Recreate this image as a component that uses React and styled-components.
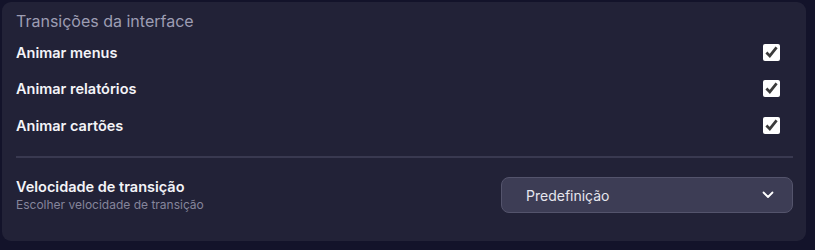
import React from 'react';
import styled, { createGlobalStyle } from 'styled-components';

const GlobalStyle = createGlobalStyle`
	html, body {
		margin: 0;
		padding: 0;
		background: #13132a;
		font-family: Inter, 'Noto Sans', sans-serif;
	}
`;

const Page = styled.div`
	width: 815px;
	height: 250px;
	padding: 2px 9px 9px 2px;
	box-sizing: border-box;
`;

const Card = styled.section`
	height: 100%;
	box-sizing: border-box;
	background: #222237;
	border-radius: 9px;
	padding: 9px 13px 0 14px;
	display: flex;
	flex-direction: column;
`;

const Heading = styled.h2`
	margin: 0 0 3px;
	font-size: 16px;
	font-weight: 400;
	color: #9d9db3;
	line-height: 20px;
`;

const ToggleRow = styled.label`
	display: flex;
	align-items: center;
	justify-content: space-between;
	height: 36px;
	padding-right: 13px;
	font-size: 14.5px;
	font-weight: 600;
	color: #f4f4f8;
	cursor: pointer;
	&:nth-of-type(3) {
		margin-top: 1px;
	}
`;

const Check = styled.input.attrs({ type: 'checkbox' })`
	width: 17px;
	height: 17px;
	margin: 0;
	accent-color: #ffffff;
`;

const Divider = styled.hr`
	border: none;
	height: 2px;
	background: #393950;
	margin: 13px 0 0;
`;

const SettingRow = styled.div`
	display: flex;
	align-items: center;
	justify-content: space-between;
	padding-top: 19px;
`;

const SettingText = styled.div`
	display: flex;
	flex-direction: column;
`;

const SettingTitle = styled.div`
	font-size: 14.5px;
	font-weight: 600;
	color: #f4f4f8;
	line-height: 20px;
`;

const SettingHint = styled.div`
	font-size: 12px;
	color: #85859b;
	line-height: 16px;
`;

const Select = styled.button`
	width: 292px;
	height: 36px;
	box-sizing: border-box;
	display: flex;
	align-items: center;
	justify-content: space-between;
	padding: 0 18px 0 24px;
	background: #3d3d55;
	border: 1px solid #54546c;
	border-radius: 8px;
	color: #e6e6ee;
	font-family: inherit;
	font-size: 14px;
`;

const items = ['Animar menus', 'Animar relatórios', 'Animar cartões'];

export default function App() {
	return (
		<>
			<GlobalStyle />
			<Page>
				<Card>
					<Heading>Transições da interface</Heading>
					{items.map((label) => (
						<ToggleRow key={label}>
							{label}
							<Check defaultChecked />
						</ToggleRow>
					))}
					<Divider />
					<SettingRow>
						<SettingText>
							<SettingTitle>Velocidade de transição</SettingTitle>
							<SettingHint>Escolher velocidade de transição</SettingHint>
						</SettingText>
						<Select>
							Predefinição
							<svg width="12" height="8" viewBox="0 0 12 8" fill="none">
								<path d="M1.5 1.5 6 6l4.5-4.5" stroke="#fff" strokeWidth="1.8" strokeLinecap="round" strokeLinejoin="round" />
							</svg>
						</Select>
					</SettingRow>
				</Card>
			</Page>
		</>
	);
}
